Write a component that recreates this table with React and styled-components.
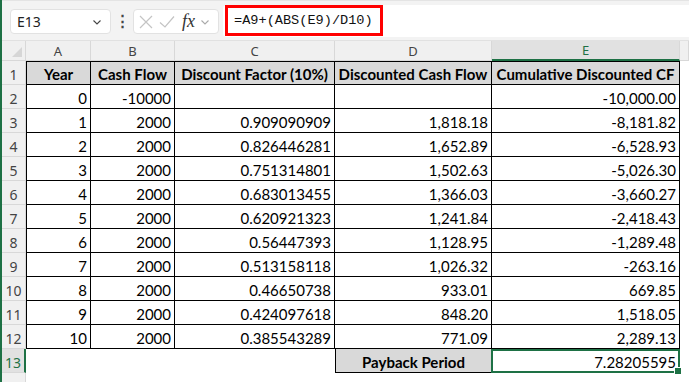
import React from "react";
import styled, { createGlobalStyle } from "styled-components";

const rows = [
  ["0", "-10000", "", "", "-10,000.00"],
  ["1", "2000", "0.909090909", "1,818.18", "-8,181.82"],
  ["2", "2000", "0.826446281", "1,652.89", "-6,528.93"],
  ["3", "2000", "0.751314801", "1,502.63", "-5,026.30"],
  ["4", "2000", "0.683013455", "1,366.03", "-3,660.27"],
  ["5", "2000", "0.620921323", "1,241.84", "-2,418.43"],
  ["6", "2000", "0.56447393", "1,128.95", "-1,289.48"],
  ["7", "2000", "0.513158118", "1,026.32", "-263.16"],
  ["8", "2000", "0.46650738", "933.01", "669.85"],
  ["9", "2000", "0.424097618", "848.20", "1,518.05"],
  ["10", "2000", "0.385543289", "771.09", "2,289.13"]
];

const headings = [
  "Year",
  "Cash Flow",
  "Discount Factor (10%)",
  "Discounted Cash Flow",
  "Cumulative Discounted CF"
];

const letters = ["A", "B", "C", "D", "E"];

const Chevron = ({ color = "#444" }) => (
  <svg width="12" height="12" viewBox="0 0 12 12">
    <path d="M2.5 4.5 L6 8 L9.5 4.5" fill="none" stroke={color} strokeWidth="1.1" />
  </svg>
);

const App = () => {
  return (
    <>
      <GlobalStyle />
      <Window>
        <FormulaBar>
          <NameBox>
            <span>E13</span>
            <Chevron />
          </NameBox>
          <Dots>⋮</Dots>
          <FuncBox>
            <svg width="16" height="16" viewBox="0 0 16 16">
              <path d="M2 2 L14 14 M14 2 L2 14" stroke="#c4c4c4" strokeWidth="1.2" />
            </svg>
            <svg width="18" height="16" viewBox="0 0 18 16">
              <path d="M2 8.5 L7 13 L16 2.5" fill="none" stroke="#c4c4c4" strokeWidth="1.2" />
            </svg>
            <Fx>fx</Fx>
            <Chevron color="#aaa" />
          </FuncBox>
          <FormulaInput>
            <Highlight>=A9+(ABS(E9)/D10)</Highlight>
          </FormulaInput>
        </FormulaBar>
        <Sheet>
          <Corner>
            <svg width="10" height="10" viewBox="0 0 10 10">
              <path d="M10 0 L10 10 L0 10 Z" fill="#d6d6d6" />
            </svg>
          </Corner>
          {letters.map(l => (
            <ColHead key={l} selected={l === "E"}>
              {l}
            </ColHead>
          ))}
          <ColHead />

          <RowHead>1</RowHead>
          {headings.map((h, i) => (
            <Cell key={h} heading first={i === 0} top>
              {h}
            </Cell>
          ))}
          <Blank />

          {rows.map((r, ri) => (
            <React.Fragment key={ri}>
              <RowHead>{ri + 2}</RowHead>
              {r.map((v, ci) => (
                <Cell key={ci} first={ci === 0}>
                  {v}
                </Cell>
              ))}
              <Blank />
            </React.Fragment>
          ))}

          <RowHead selected>13</RowHead>
          <Blank />
          <Blank />
          <Blank />
          <Cell heading first>
            Payback Period
          </Cell>
          <Active>
            7.28205595
            <Handle />
          </Active>
          <Blank />

          <RowHead>14</RowHead>
        </Sheet>
      </Window>
    </>
  );
};

const GlobalStyle = createGlobalStyle`
  body {
    margin: 0;
    background: #fff;
    font-family: "Lato", "Liberation Sans", sans-serif;
  }
`;

const Window = styled.div`
  width: 689px;
  height: 382px;
  overflow: hidden;
  border-left: 2px solid #1e7145;
  box-sizing: border-box;
  background: #fff;
`;

const FormulaBar = styled.div`
  height: 41px;
  display: flex;
  align-items: center;
  background: #f3f3f3;
  border-top: 1px solid #e4e4e4;
  border-bottom: 1px solid #e1e1e1;
  box-sizing: border-box;
  padding-left: 8px;
`;

const NameBox = styled.div`
  width: 101px;
  height: 25px;
  margin-top: 2px;
  box-sizing: border-box;
  background: #fff;
  border: 1px solid #e2e2e2;
  border-radius: 4px;
  display: flex;
  align-items: center;
  justify-content: space-between;
  padding: 0 7px 0 6px;
  font-family: "Noto Sans", "Open Sans", sans-serif;
  font-size: 14px;
  color: #222;
`;

const Dots = styled.div`
  width: 22px;
  text-align: center;
  font-size: 15px;
  font-weight: bold;
  color: #444;
`;

const FuncBox = styled.div`
  width: 86px;
  height: 25px;
  margin-top: 2px;
  box-sizing: border-box;
  background: #fff;
  border: 1px solid #e2e2e2;
  border-radius: 4px;
  display: flex;
  align-items: center;
  gap: 4px;
  padding-left: 4px;
`;

const Fx = styled.span`
  font-family: "Liberation Serif", serif;
  font-style: italic;
  font-size: 18px;
  color: #333;
  margin-left: 2px;
`;

const FormulaInput = styled.div`
  flex: 1;
  height: 32px;
  margin-left: 4px;
  background: #fff;
  border-radius: 4px 0 0 4px;
  display: flex;
  align-items: center;
`;

const Highlight = styled.div`
  height: 31px;
  box-sizing: border-box;
  border: 3px solid #ff0000;
  padding: 0 7px 0 6px;
  display: flex;
  align-items: center;
  font-family: "Liberation Mono", monospace;
  font-size: 13.6px;
  color: #111;
  margin-left: 2px;
`;

const Sheet = styled.div`
  display: grid;
  grid-template-columns: 24px 65px 84px 160px 157px 188px 9px;
  grid-template-rows: 20px repeat(14, 24px);
`;

const Corner = styled.div`
  background: #f0f0f0;
  border-right: 1px solid #d8d8d8;
  border-bottom: 1px solid #d8d8d8;
  box-sizing: border-box;
  display: flex;
  align-items: flex-end;
  justify-content: flex-end;
  padding: 0 3px 3px 0;
`;

const ColHead = styled.div`
  background: ${p => (p.selected ? "#e1e1e1" : "#f0f0f0")};
  color: ${p => (p.selected ? "#1e7145" : "#444")};
  border-right: 1px solid #d8d8d8;
  border-bottom: ${p => (p.selected ? "2px solid #1e7145" : "1px solid #d8d8d8")};
  box-sizing: border-box;
  font-family: "Noto Sans", "Open Sans", sans-serif;
  font-size: 13px;
  display: flex;
  align-items: center;
  justify-content: center;
`;

const RowHead = styled.div`
  background: ${p => (p.selected ? "#e1e1e1" : "#f0f0f0")};
  color: ${p => (p.selected ? "#1e7145" : "#444")};
  border-right: ${p => (p.selected ? "2px solid #1e7145" : "1px solid #d8d8d8")};
  border-bottom: 1px solid #d8d8d8;
  box-sizing: border-box;
  font-family: "Noto Sans", "Open Sans", sans-serif;
  font-size: 14px;
  display: flex;
  align-items: flex-end;
  justify-content: center;
  padding-bottom: 0;
`;

const Cell = styled.div`
  box-sizing: border-box;
  border-right: 1px solid #000;
  border-bottom: 1px solid #000;
  border-left: ${p => (p.first ? "1px solid #000" : "none")};
  border-top: ${p => (p.top ? "1px solid #000" : "none")};
  background: ${p => (p.heading ? "#d9d9d9" : "#fff")};
  font-weight: ${p => (p.heading ? 700 : 400)};
  font-size: 15px;
  color: #000;
  display: flex;
  align-items: flex-end;
  justify-content: ${p => (p.heading ? "center" : "flex-end")};
  padding: 0 3px 1px;
  white-space: nowrap;
`;

const Blank = styled.div``;

const Active = styled.div`
  position: relative;
  box-sizing: border-box;
  border: 2px solid #1e7145;
  margin-left: -1px;
  font-size: 15px;
  display: flex;
  align-items: flex-end;
  justify-content: flex-end;
  padding: 0 2px 0;
`;

const Handle = styled.div`
  position: absolute;
  right: -4px;
  bottom: -4px;
  width: 6px;
  height: 6px;
  background: #1e7145;
  border: 1px solid #fff;
`;

export default App;
